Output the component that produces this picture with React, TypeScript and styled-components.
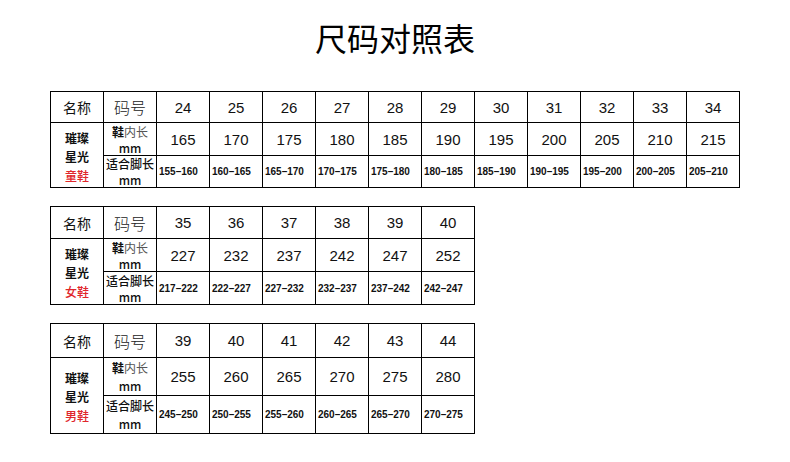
import styled, { createGlobalStyle } from "styled-components";

const GlobalStyle = createGlobalStyle`
  html, body {
    margin: 0;
    padding: 0;
    background: #ffffff;
  }
  body {
    font-family: "Liberation Sans", "Noto Sans CJK SC", sans-serif;
    color: #111111;
  }
`;

const Page = styled.div`
  width: 790px;
  height: 462px;
  display: flex;
  flex-direction: column;
  align-items: flex-start;
  padding: 0 0 0 50px;
  box-sizing: border-box;
  overflow: hidden;
`;

const Title = styled.h1`
  margin: 17px 0 0 -50px;
  width: 790px;
  text-align: center;
  font-family: "Noto Sans CJK SC", sans-serif;
  font-weight: 400;
  font-size: 32px;
  line-height: 40px;
  color: #000000;
`;

const Tables = styled.div`
  display: flex;
  flex-direction: column;
  align-items: flex-start;
  gap: 18px;
  margin-top: 34px;
`;

const SizeTable = styled.table<{ $cols: number }>`
  width: ${({ $cols }) => $cols * 53 + 1}px;
  border-collapse: collapse;
  table-layout: fixed;
  border: 1px solid #000000;
`;

const Row = styled.tr<{ $h: number }>`
  height: ${({ $h }) => $h}px;
`;

const Cell = styled.td`
  padding: 0;
  border: 1px solid #000000;
  text-align: center;
  vertical-align: middle;
  font-size: 15px;
  color: #111111;
  white-space: nowrap;
  overflow: visible;
`;

const HeadName = styled(Cell)`
  font-family: "Noto Sans CJK SC", sans-serif;
  font-size: 14px;
  font-weight: 400;
`;

const HeadCode = styled(Cell)`
  font-family: "Noto Sans CJK SC", sans-serif;
  font-size: 16px;
  font-weight: 300;
  color: #222222;
`;

const NameCell = styled(Cell)`
  font-family: "Noto Sans CJK SC", sans-serif;
  font-size: 12px;
  font-weight: 700;
  line-height: 19px;
  padding-top: 2px;
`;

const Red = styled.span`
  display: block;
  color: #e0262b;
  font-weight: 500;
`;

const Line = styled.span`
  display: block;
`;

const UnitCell = styled(Cell)`
  font-family: "Noto Sans CJK SC", sans-serif;
  font-size: 12px;
  font-weight: 500;
`;

const UnitStack = styled.div<{ $h: number; $lh: number }>`
  height: ${({ $h }) => $h}px;
  display: flex;
  flex-direction: column;
  justify-content: center;
  line-height: ${({ $lh }) => $lh}px;
  padding-top: 1px;
  box-sizing: border-box;
`;

const Strong = styled.span`
  font-weight: 700;
  color: #111111;
`;

const Soft = styled.span`
  font-weight: 400;
  color: #555555;
`;

const RangeCell = styled(Cell)`
  text-align: left;
  padding-left: 2px;
  font-size: 10px;
  font-weight: 700;
`;

type Spec = {
  kind: string;
  sizes: number[];
  inner: number[];
  heights: [number, number, number];
  lh: number;
};

const specs: Spec[] = [
  {
    kind: "童鞋",
    sizes: [24, 25, 26, 27, 28, 29, 30, 31, 32, 33, 34],
    inner: [165, 170, 175, 180, 185, 190, 195, 200, 205, 210, 215],
    heights: [31, 33, 32],
    lh: 16,
  },
  {
    kind: "女鞋",
    sizes: [35, 36, 37, 38, 39, 40],
    inner: [227, 232, 237, 242, 247, 252],
    heights: [32, 33, 33],
    lh: 16,
  },
  {
    kind: "男鞋",
    sizes: [39, 40, 41, 42, 43, 44],
    inner: [255, 260, 265, 270, 275, 280],
    heights: [34, 38, 38],
    lh: 18,
  },
];

function ChartTable({ spec }: { spec: Spec }) {
  const [h1, h2, h3] = spec.heights;
  return (
    <SizeTable $cols={spec.sizes.length + 2}>
      <tbody>
        <Row $h={h1}>
          <HeadName>名称</HeadName>
          <HeadCode>码号</HeadCode>
          {spec.sizes.map((s) => (
            <Cell key={s}>{s}</Cell>
          ))}
        </Row>
        <Row $h={h2}>
          <NameCell rowSpan={2}>
            <Line>璀璨</Line>
            <Line>星光</Line>
            <Red>{spec.kind}</Red>
          </NameCell>
          <UnitCell>
            <UnitStack $h={h2 - 1} $lh={spec.lh}>
              <Line>
                <Strong>鞋</Strong>
                <Soft>内长</Soft>
              </Line>
              <Line>mm</Line>
            </UnitStack>
          </UnitCell>
          {spec.inner.map((v) => (
            <Cell key={v}>{v}</Cell>
          ))}
        </Row>
        <Row $h={h3}>
          <UnitCell>
            <UnitStack $h={h3 - 1} $lh={spec.lh}>
              <Line>适合脚长</Line>
              <Line>mm</Line>
            </UnitStack>
          </UnitCell>
          {spec.inner.map((v) => (
            <RangeCell key={v}>
              {v - 10}–{v - 5}
            </RangeCell>
          ))}
        </Row>
      </tbody>
    </SizeTable>
  );
}

export default function App() {
  return (
    <>
      <GlobalStyle />
      <Page>
        <Title>尺码对照表</Title>
        <Tables>
          {specs.map((s) => (
            <ChartTable key={s.kind} spec={s} />
          ))}
        </Tables>
      </Page>
    </>
  );
}
